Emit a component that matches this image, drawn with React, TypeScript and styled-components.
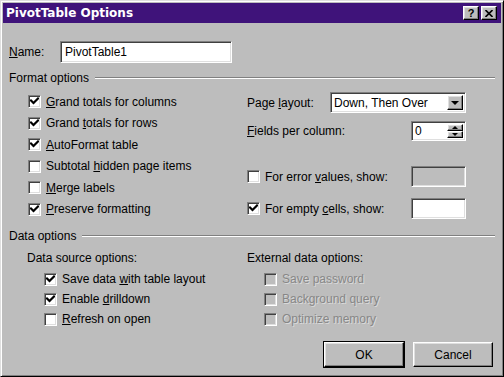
import React from 'react';
import styled, { createGlobalStyle } from 'styled-components';

const BG = '#bdbdbd';

const Global = createGlobalStyle`
  html, body { margin: 0; padding: 0; background: ${BG}; }
  body { font-family: "Liberation Sans", Arial, sans-serif; font-size: 12px; color: #000; }
  u { text-decoration: underline; text-underline-offset: 1px; }
`;

const Window = styled.div`
  width: 504px;
  height: 377px;
  box-sizing: border-box;
  background: ${BG};
  border: 1px solid;
  border-color: #dfdfdf #000 #000 #dfdfdf;
  box-shadow: inset 1px 1px #fff, inset -1px -1px #808080;
  padding: 2px;
  display: flex;
  flex-direction: column;
`;

const TitleBar = styled.div`
  height: 20px;
  background: #3f137a;
  display: flex;
  align-items: center;
  padding: 0 4px 0 3px;
  color: #fff;
  font-family: "DejaVu Sans", "Liberation Sans", sans-serif;
  font-weight: bold;
  font-size: 12px;
`;

const TitleText = styled.div`
  flex: 1;
`;

const TitleButtons = styled.div`
  display: flex;
  gap: 2px;
`;

const raised = `
  border: 1px solid;
  border-color: #fff #000 #000 #fff;
  box-shadow: inset -1px -1px #808080, inset 1px 1px #dfdfdf;
  background: ${BG};
  box-sizing: border-box;
`;

const sunken = `
  border: 1px solid;
  border-color: #808080 #fff #fff #808080;
  box-shadow: inset 1px 1px #404040, inset -1px -1px #dfdfdf;
  box-sizing: border-box;
`;

const TitleButton = styled.div`
  ${raised}
  width: 16px;
  height: 14px;
  display: flex;
  align-items: center;
  justify-content: center;
  color: #000;
  font-family: "Liberation Sans", Arial, sans-serif;
  font-size: 11px;
  font-weight: bold;
`;

const Body = styled.div`
  flex: 1;
  display: flex;
  flex-direction: column;
  padding: 0 6px;
`;

const NameRow = styled.div`
  display: flex;
  align-items: center;
  margin-top: 18px;
`;

const NameLabel = styled.div`
  width: 51px;
`;

const TextField = styled.div<{ $w: number; $h: number; $disabled?: boolean }>`
  ${sunken}
  width: ${p => p.$w}px;
  height: ${p => p.$h}px;
  background: ${p => (p.$disabled ? BG : '#fff')};
  display: flex;
  align-items: center;
  padding-left: 4px;
`;

const SectionHeader = styled.div<{ $mt: number }>`
  display: flex;
  align-items: center;
  gap: 6px;
  height: 14px;
  margin-top: ${p => p.$mt}px;
`;

const Rule = styled.div`
  flex: 1;
  height: 0;
  border-top: 1px solid #808080;
  border-bottom: 1px solid #fff;
`;

const FormatGrid = styled.div`
  display: grid;
  grid-template-columns: 219px 1fr;
  padding-left: 19px;
  margin-top: 6px;
`;

const Column = styled.div`
  display: flex;
  flex-direction: column;
`;

const CheckRow = styled.div<{ $h: number; $mt?: number }>`
  display: flex;
  align-items: center;
  gap: 5px;
  height: ${p => p.$h}px;
  margin-top: ${p => p.$mt ?? 0}px;
`;

const FieldRow = styled.div<{ $h: number; $mt: number }>`
  display: flex;
  align-items: center;
  height: ${p => p.$h}px;
  margin-top: ${p => p.$mt}px;
`;

const FieldLabel = styled.div<{ $w: number }>`
  width: ${p => p.$w}px;
  display: flex;
  align-items: center;
  gap: 5px;
`;

const Box = styled.div<{ $disabled?: boolean }>`
  ${sunken}
  width: 13px;
  height: 13px;
  flex: none;
  background: ${p => (p.$disabled ? BG : '#fff')};
  display: flex;
  align-items: center;
  justify-content: center;
`;

const Label = styled.span<{ $disabled?: boolean }>`
  color: ${p => (p.$disabled ? '#878787' : '#000')};
  text-shadow: ${p => (p.$disabled ? '1px 1px 0 rgba(255,255,255,0.45)' : 'none')};
  white-space: nowrap;
`;

const Combo = styled.div`
  ${sunken}
  width: 136px;
  height: 21px;
  background: #fff;
  display: flex;
  align-items: stretch;
  padding: 2px;
`;

const ComboText = styled.div`
  flex: 1;
  display: flex;
  align-items: center;
  padding-left: 1px;
`;

const DropButton = styled.div`
  ${raised}
  width: 16px;
  display: flex;
  align-items: center;
  justify-content: center;
`;

const Arrow = styled.div<{ $up?: boolean; $size: number }>`
  width: 0;
  height: 0;
  border-left: ${p => p.$size}px solid transparent;
  border-right: ${p => p.$size}px solid transparent;
  ${p =>
    p.$up
      ? `border-bottom: ${p.$size}px solid #000;`
      : `border-top: ${p.$size}px solid #000;`}
`;

const Spinner = styled.div`
  ${sunken}
  width: 55px;
  height: 20px;
  background: #fff;
  display: flex;
  align-items: stretch;
  padding: 2px;
`;

const SpinText = styled.div`
  flex: 1;
  display: flex;
  align-items: center;
  padding-left: 1px;
`;

const SpinButtons = styled.div`
  width: 16px;
  display: flex;
  flex-direction: column;
`;

const SpinButton = styled.div`
  ${raised}
  flex: 1;
  display: flex;
  align-items: center;
  justify-content: center;
`;

const DataGrid = styled.div`
  display: grid;
  grid-template-columns: 220px 1fr;
  padding-left: 18px;
  margin-top: 7px;
`;

const SubLabel = styled.div`
  height: 16px;
  display: flex;
  align-items: center;
`;

const SubList = styled.div`
  display: flex;
  flex-direction: column;
  padding-left: 17px;
  margin-top: 3px;
`;

const ButtonRow = styled.div`
  display: flex;
  justify-content: flex-end;
  align-items: center;
  gap: 8px;
  padding-right: 2px;
  margin-top: 12px;
`;

const PushButton = styled.div<{ $default?: boolean }>`
  ${raised}
  width: 80px;
  height: 25px;
  display: flex;
  align-items: center;
  justify-content: center;
  ${p => (p.$default ? 'outline: 1px solid #000;' : '')}
`;

const DefaultFrame = styled.div`
  border: 1px solid #000;
  display: flex;
`;

const Check = () => (
  <svg width="9" height="9" viewBox="0 0 9 9">
    <path d="M1 3.5 L3.5 6 L8 1.5" fill="none" stroke="#000" strokeWidth="2.2" strokeLinecap="square" />
  </svg>
);

const CheckBox: React.FC<{ checked?: boolean; disabled?: boolean; children: React.ReactNode }> = ({
  checked,
  disabled,
  children,
}) => (
  <>
    <Box $disabled={disabled}>{checked && <Check />}</Box>
    <Label $disabled={disabled}>{children}</Label>
  </>
);

export default function App() {
  return (
    <>
      <Global />
      <Window>
        <TitleBar>
          <TitleText>PivotTable Options</TitleText>
          <TitleButtons>
            <TitleButton>?</TitleButton>
            <TitleButton>
              <svg width="8" height="7" viewBox="0 0 8 7">
                <path d="M0.5 0 L7.5 7 M7.5 0 L0.5 7" stroke="#000" strokeWidth="1.6" />
              </svg>
            </TitleButton>
          </TitleButtons>
        </TitleBar>
        <Body>
          <NameRow>
            <NameLabel>
              <u>N</u>ame:
            </NameLabel>
            <TextField $w={172} $h={22}>PivotTable1</TextField>
          </NameRow>

          <SectionHeader $mt={8}>
            <span>Format options</span>
            <Rule />
          </SectionHeader>

          <FormatGrid>
            <Column>
              <CheckRow $h={21.5}>
                <CheckBox checked>
                  <u>G</u>rand totals for columns
                </CheckBox>
              </CheckRow>
              <CheckRow $h={21.5}>
                <CheckBox checked>
                  Grand <u>t</u>otals for rows
                </CheckBox>
              </CheckRow>
              <CheckRow $h={21.5}>
                <CheckBox checked>
                  <u>A</u>utoFormat table
                </CheckBox>
              </CheckRow>
              <CheckRow $h={21.5}>
                <CheckBox>
                  Subtotal <u>h</u>idden page items
                </CheckBox>
              </CheckRow>
              <CheckRow $h={21.5}>
                <CheckBox>
                  <u>M</u>erge labels
                </CheckBox>
              </CheckRow>
              <CheckRow $h={21.5}>
                <CheckBox checked>
                  <u>P</u>reserve formatting
                </CheckBox>
              </CheckRow>
            </Column>
            <Column>
              <FieldRow $h={21} $mt={1}>
                <FieldLabel $w={83}>
                  <span>
                    Page <u>l</u>ayout:
                  </span>
                </FieldLabel>
                <Combo>
                  <ComboText>Down, Then Over</ComboText>
                  <DropButton>
                    <Arrow $size={4} />
                  </DropButton>
                </Combo>
              </FieldRow>
              <FieldRow $h={20} $mt={8}>
                <FieldLabel $w={164}>
                  <span>
                    <u>F</u>ields per column:
                  </span>
                </FieldLabel>
                <Spinner>
                  <SpinText>0</SpinText>
                  <SpinButtons>
                    <SpinButton>
                      <Arrow $up $size={3} />
                    </SpinButton>
                    <SpinButton>
                      <Arrow $size={3} />
                    </SpinButton>
                  </SpinButtons>
                </Spinner>
              </FieldRow>
              <FieldRow $h={21} $mt={25}>
                <FieldLabel $w={164}>
                  <CheckBox>
                    For error <u>v</u>alues, show:
                  </CheckBox>
                </FieldLabel>
                <TextField $w={55} $h={21} $disabled />
              </FieldRow>
              <FieldRow $h={21} $mt={11}>
                <FieldLabel $w={164}>
                  <CheckBox checked>
                    For empty <u>c</u>ells, show:
                  </CheckBox>
                </FieldLabel>
                <TextField $w={55} $h={21} />
              </FieldRow>
            </Column>
          </FormatGrid>

          <SectionHeader $mt={9}>
            <span>Data options</span>
            <Rule />
          </SectionHeader>

          <DataGrid>
            <Column>
              <SubLabel>Data source options:</SubLabel>
              <SubList>
                <CheckRow $h={20}>
                  <CheckBox checked>
                    Save data <u>w</u>ith table layout
                  </CheckBox>
                </CheckRow>
                <CheckRow $h={20}>
                  <CheckBox checked>
                    Enable <u>d</u>rilldown
                  </CheckBox>
                </CheckRow>
                <CheckRow $h={20}>
                  <CheckBox>
                    <u>R</u>efresh on open
                  </CheckBox>
                </CheckRow>
              </SubList>
            </Column>
            <Column>
              <SubLabel>External data options:</SubLabel>
              <SubList>
                <CheckRow $h={20}>
                  <CheckBox disabled>Save password</CheckBox>
                </CheckRow>
                <CheckRow $h={20}>
                  <CheckBox disabled>Background query</CheckBox>
                </CheckRow>
                <CheckRow $h={20}>
                  <CheckBox disabled>Optimize memory</CheckBox>
                </CheckRow>
              </SubList>
            </Column>
          </DataGrid>

          <ButtonRow>
            <DefaultFrame>
              <PushButton>OK</PushButton>
            </DefaultFrame>
            <PushButton>Cancel</PushButton>
          </ButtonRow>
        </Body>
      </Window>
    </>
  );
}
